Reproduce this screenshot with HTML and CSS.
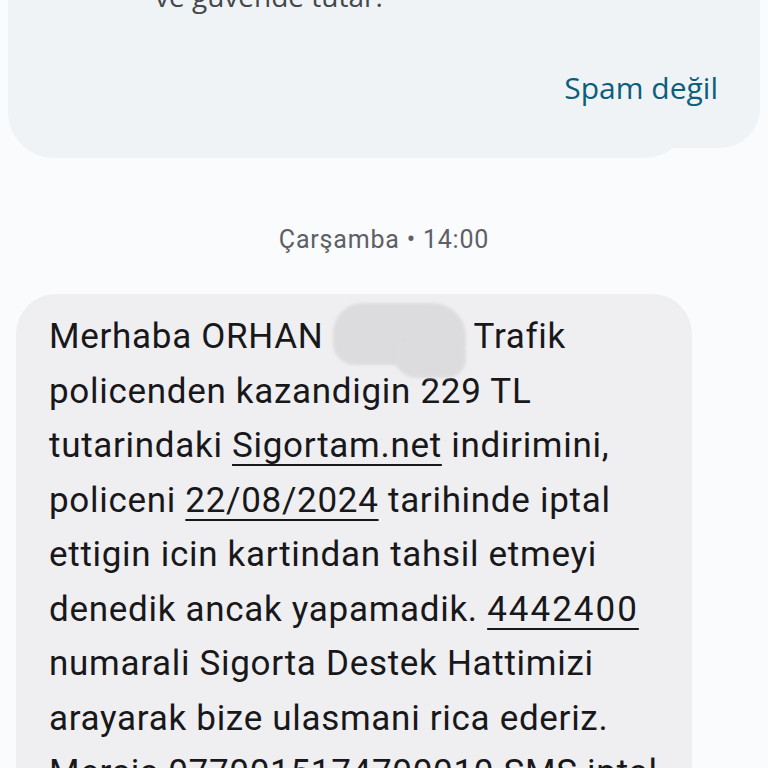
FILE: index.html
```html
<!DOCTYPE html>
<html lang="tr">
<head>
<meta charset="utf-8">
<link rel="stylesheet" href="styles.css">
</head>
<body>
<div class="screen">
  <section class="spam-card">
    <p class="spam-text">ve güvende tutar.</p>
    <div class="spam-actions"><span class="spam-btn">Spam değil</span></div>
  </section>
  <div class="stamp">Çarşamba • 14:00</div>
  <div class="bubble">
    <p class="msg">Merhaba ORHAN <span class="redact"></span> Trafik<br>policenden kazandigin 229 TL<br>tutarindaki <span class="link">Sigortam.net</span> indirimini,<br>policeni <span class="link">22/08/2024</span> tarihinde iptal<br>ettigin icin kartindan tahsil etmeyi<br>denedik ancak yapamadik. <span class="link num">4442400</span><br>numarali Sigorta Destek Hattimizi<br>arayarak bize ulasmani rica ederiz.<br>Mersis 0770015174700010 SMS iptal<br>icin RED yaz 4609'a gonder.</p>
  </div>
</div>
</body>
</html>
```
FILE: styles.css
```css
html, body {
  margin: 0;
  padding: 0;
  background: #fafbfd;
  overflow: hidden;
}
.screen {
  width: 768px;
  height: 768px;
  overflow: hidden;
  display: flex;
  flex-direction: column;
}
.screen > * {
  flex-shrink: 0;
}
.spam-card {
  position: relative;
  margin: -40px 8px 0 8px;
  background: #eff3f6;
  border-radius: 0 0 40px 40px;
  padding: 18px 42px 0 147px;
  height: 188px;
  box-sizing: border-box;
}
.spam-card::after {
  content: "";
  position: absolute;
  left: 0;
  right: 70px;
  bottom: -10px;
  height: 60px;
  background: #eff3f6;
  border-radius: 0 0 46px 46px;
}
.spam-text {
  position: relative;
  z-index: 1;
  margin: 0;
  font-family: "Open Sans", sans-serif;
  font-size: 28px;
  line-height: 36px;
  color: #44474b;
}
.spam-actions {
  position: relative;
  z-index: 1;
  display: flex;
  justify-content: flex-end;
  margin-top: 54px;
}
.spam-btn {
  font-family: "Open Sans", sans-serif;
  font-weight: 500;
  font-size: 30px;
  line-height: 40px;
  color: #0b5f7c;
  letter-spacing: 0;
}
.stamp {
  margin-top: 77px;
  text-align: center;
  font-family: "Roboto", sans-serif;
  font-size: 25px;
  letter-spacing: 0.8px;
  color: #5d6065;
  line-height: 30px;
}
.bubble {
  margin: 39px 0 0 16px;
  width: 676px;
  background: #efeff2;
  border-radius: 40px 40px 0 0;
  padding: 16px 0 0 33px;
  box-sizing: border-box;
}
.msg {
  margin: 0;
  font-family: "Roboto", sans-serif;
  font-size: 35px;
  letter-spacing: 0.7px;
  line-height: 54.5px;
  color: #18181b;
  white-space: nowrap;
}
.link {
  text-decoration: underline;
  text-decoration-thickness: 2px;
  text-underline-offset: 7px;
}
.num {
  letter-spacing: 2px;
}
.redact {
  display: inline-block;
  position: relative;
  width: 133px;
  height: 1em;
  margin: 0 -1px 0 0;
  vertical-align: top;
}
.redact::before,
.redact::after {
  content: "";
  position: absolute;
  background: #dcdcdf;
  filter: blur(1.5px);
}
.redact::before {
  left: 0;
  top: -7px;
  width: 133px;
  height: 62px;
  border-radius: 30px 34px 24px 22px;
}
.redact::after {
  right: 0;
  top: 30px;
  width: 72px;
  height: 38px;
  border-radius: 20px 20px 26px 30px;
}
```
